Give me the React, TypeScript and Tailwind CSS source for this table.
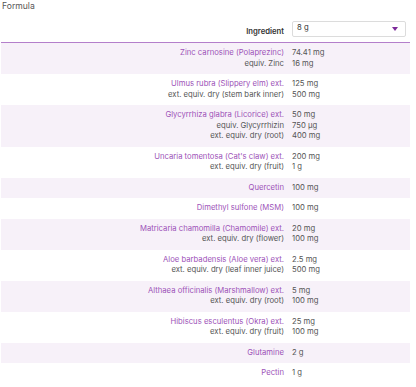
import React from "react";

type Row = { lines: [string, string][] };

const rows: Row[] = [
  { lines: [["Zinc carnosine (Polaprezinc)", "74.41 mg"], ["equiv. Zinc", "16 mg"]] },
  { lines: [["Ulmus rubra (Slippery elm) ext.", "125 mg"], ["ext. equiv. dry (stem bark inner)", "500 mg"]] },
  {
    lines: [
      ["Glycyrrhiza glabra (Licorice) ext.", "50 mg"],
      ["equiv. Glycyrrhizin", "750 µg"],
      ["ext. equiv. dry (root)", "400 mg"],
    ],
  },
  { lines: [["Uncaria tomentosa (Cat's claw) ext.", "200 mg"], ["ext. equiv. dry (fruit)", "1 g"]] },
  { lines: [["Quercetin", "100 mg"]] },
  { lines: [["Dimethyl sulfone (MSM)", "100 mg"]] },
  { lines: [["Matricaria chamomilla (Chamomile) ext.", "20 mg"], ["ext. equiv. dry (flower)", "100 mg"]] },
  { lines: [["Aloe barbadensis (Aloe vera) ext.", "2.5 mg"], ["ext. equiv. dry (leaf inner juice)", "500 mg"]] },
  { lines: [["Althaea officinalis (Marshmallow) ext.", "5 mg"], ["ext. equiv. dry (root)", "100 mg"]] },
  { lines: [["Hibiscus esculentus (Okra) ext.", "25 mg"], ["ext. equiv. dry (fruit)", "100 mg"]] },
  { lines: [["Glutamine", "2 g"]] },
  { lines: [["Pectin", "1 g"]] },
];

export default function App() {
  return (
    <div
      className="w-[416px] h-[387px] bg-white overflow-hidden text-[#4a4a4a]"
      style={{ fontFamily: "Inter, 'Liberation Sans', sans-serif" }}
    >
      <div className="pl-[2px] text-[8.6px] leading-[12px] text-[#555]">Formula</div>
      <div className="ml-[1px] w-[409px]">
        <div className="flex items-end pt-[9px] pb-[5px] border-b border-[#b47fcb]">
          <div className="w-[287px] pr-[4px] text-right text-[7.7px] leading-[10.5px] font-semibold text-[#333]">
            Ingredient
          </div>
          <div className="pl-[4px]">
            <div className="w-[114px] h-[16px] border border-[#dcdcdc] rounded-[2px] flex items-center justify-between pl-[4px] pr-[7px]">
              <span className="text-[7.7px] leading-[10px] text-[#333] -mt-[2px]">8 g</span>
              <svg width="6" height="4" viewBox="0 0 6 4">
                <path d="M0 0 L6 0 L3 4 Z" fill="#7d2a9a" />
              </svg>
            </div>
          </div>
        </div>
        {rows.map((r, i) => (
          <div
            key={i}
            className={`flex py-[5px] text-[7.7px] leading-[10.5px] ${i % 2 === 0 ? "bg-[#f7f1f9]" : "bg-white"}`}
          >
            <div className="w-[287px] pr-[4px] text-right">
              {r.lines.map((l, j) => (
                <div key={j} className={j === 0 ? "text-[#9d52b8]" : "text-[#555]"}>
                  {l[0]}
                </div>
              ))}
            </div>
            <div className="pl-[4px] text-[#555]">
              {r.lines.map((l, j) => (
                <div key={j}>{l[1]}</div>
              ))}
            </div>
          </div>
        ))}
      </div>
    </div>
  );
}
